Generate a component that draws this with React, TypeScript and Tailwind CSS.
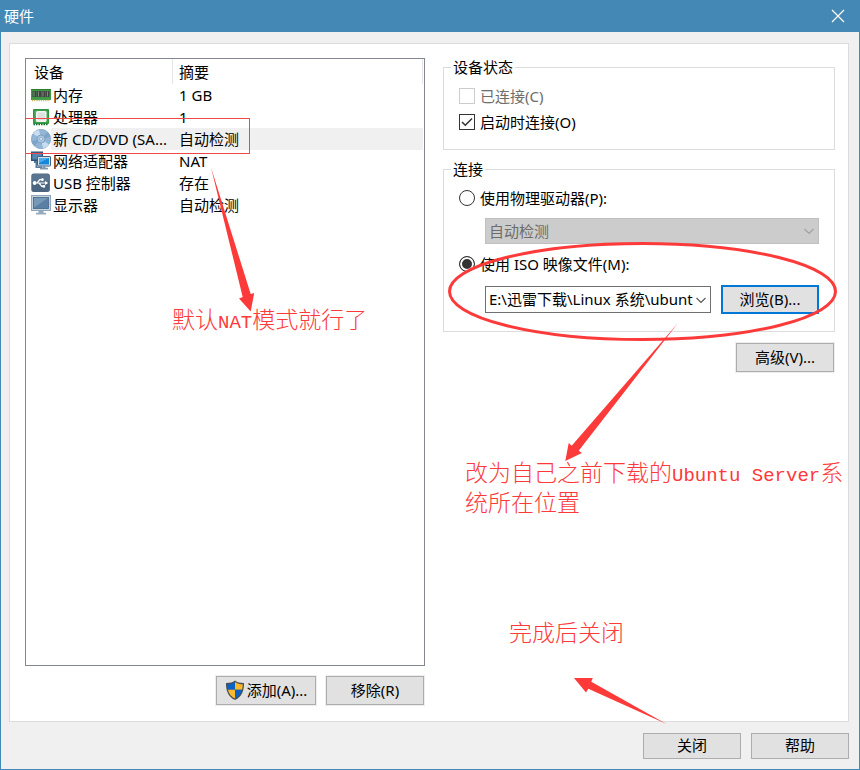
import React, { useState } from 'react';

interface Device {
  name: string;
  summary: string;
  icon: React.ReactNode;
}

const MemoryIcon = () => (
  <svg className="size-5 shrink-0" viewBox="0 0 20 20">
    <rect x="0" y="4" width="20" height="11" fill="#3f9a45" />
    <rect x="0" y="4" width="20" height="1" fill="#2c7d33" />
    <path d="M1.500 6h4v6h-4zM6 6h4v6H6zM10.500 6h4v6h-4zM15 6h3.500v6H15z" fill="#3f423f" />
    <path d="M2.500 6.500h1v5h-1zM7 6.500h1v5H7zM11.500 6.500h1v5h-1zM16 6.500h1v5h-1z" fill="#858a85" />
    <path d="M1 15.500h18" stroke="#c9b45a" strokeWidth="1.600" strokeDasharray="1.200 1" />
  </svg>
);

const CpuIcon = () => (
  <svg className="size-5 shrink-0" viewBox="0 0 20 20">
    <rect x="2" y="2" width="16" height="15" rx="1" fill="#2f9340" />
    <path d="M2.500 17.500h15" stroke="#14692a" strokeWidth="1.400" strokeDasharray="1.500 1" />
    <rect x="3.500" y="3.500" width="13" height="12" fill="#4fb05c" />
    <rect x="5" y="4" width="10.500" height="11" rx="1.500" fill="#f0f1f0" />
    <rect x="6.500" y="5.500" width="7.500" height="7.500" fill="#dfe1df" />
  </svg>
);

const DiscIcon = () => (
  <svg className="size-5 shrink-0" viewBox="0 0 20 20">
    <circle cx="10" cy="10" r="9.700" fill="#94b6d6" stroke="#7295b8" strokeWidth="0.600" />
    <path d="M10 10 2 4.500A9.500 9.500 0 0 1 8 .7zM10 10l8 5.500a9.500 9.500 0 0 1-6 3.800z" fill="#c8ddef" />
    <path d="M10 10 .6 12a9.500 9.500 0 0 0 3 5zM10 10l9.400-2a9.500 9.500 0 0 0-3-5z" fill="#7da5ca" />
    <circle cx="10" cy="10" r="4" fill="#a9c7e2" stroke="#7599bc" strokeWidth="0.800" />
    <circle cx="10" cy="10" r="1.400" fill="#f2f7fb" stroke="#6d90b2" strokeWidth="0.600" />
  </svg>
);

const NetworkIcon = () => (
  <svg className="size-5 shrink-0" viewBox="0 0 20 20">
    <rect x="0.500" y="1" width="11" height="8.500" fill="#3b678f" stroke="#2f5275" />
    <rect x="1.500" y="2" width="9" height="6" fill="#5287b5" />
    <path d="M3 10h3v5.500h5v1.500H4.500v-5H3z" fill="#587a9a" />
    <rect x="6.500" y="5.500" width="13" height="9.500" rx="0.500" fill="#d5e0ea" stroke="#3e6588" />
    <rect x="8" y="7" width="10" height="6.500" fill="#1687d9" />
    <path d="M8 7h10l-10 5z" fill="#50adeb" />
    <path d="M11.500 15h3v1.800h2.500v1.700H9v-1.700h2.500z" fill="#8199af" />
  </svg>
);

const UsbIcon = () => (
  <svg className="size-5 shrink-0" viewBox="0 0 20 20">
    <rect x="0.300" y="0.500" width="18.600" height="18.400" rx="2.500" fill="#4b6581" />
    <rect x="1" y="1" width="17.200" height="8" rx="2" fill="#5b7590" />
    <path
      d="M4 10h11M6 10l2.800-3.300H11M8 10l2.800 3.300H13"
      fill="none"
      stroke="#fff"
      strokeWidth="1.200"
    />
    <circle cx="3.600" cy="10" r="1.900" fill="#fff" />
    <circle cx="11.400" cy="6.700" r="1.400" fill="#fff" />
    <rect x="11.500" y="12" width="2.600" height="2.600" fill="#fff" />
    <path d="M14 8v4l3.200-2z" fill="#fff" />
  </svg>
);

const DisplayIcon = () => (
  <svg className="size-5 shrink-0" viewBox="0 0 20 20">
    <rect x="0.500" y="0.500" width="19" height="15" fill="#c5d3df" stroke="#8fa6bb" />
    <rect x="2.500" y="2.500" width="15" height="11" fill="#5a7fa4" stroke="#456789" strokeWidth="0.800" />
    <path d="M3 3h14L3 12.500z" fill="#7898b7" />
    <path d="M7.500 16h5v1.700H15v1.800H5v-1.800h2.500z" fill="#93a9bd" />
  </svg>
);

const ShieldIcon = () => (
  <svg className="size-5 shrink-0" viewBox="0 0 20 20">
    <path
      d="M10 .4C7.500 2.300 4.400 3 1 2.900.8 10.300 3 16.700 10 19.900 17 16.700 19.200 10.300 19 2.900 15.600 3 12.500 2.300 10 .4z"
      fill="#4b4f55"
    />
    <path d="M10 2C7.700 3.500 5.200 4.300 2.300 4.300c0 2 .1 3.800.6 5.500H10z" fill="#0b62c4" />
    <path d="M10 2c2.300 1.500 4.800 2.300 7.700 2.300 0 2-.1 3.800-.6 5.500H10z" fill="#fdb92c" />
    <path d="M2.900 9.800C3.900 13.800 6.200 16.700 10 18.500V9.800z" fill="#fdb92c" />
    <path d="M17.100 9.800C16.100 13.800 13.800 16.700 10 18.500V9.800z" fill="#0b62c4" />
  </svg>
);

const devices: Device[] = [
  { name: '内存', summary: '1 GB', icon: <MemoryIcon /> },
  { name: '处理器', summary: '1', icon: <CpuIcon /> },
  { name: '新 CD/DVD (SA...', summary: '自动检测', icon: <DiscIcon /> },
  { name: '网络适配器', summary: 'NAT', icon: <NetworkIcon /> },
  { name: 'USB 控制器', summary: '存在', icon: <UsbIcon /> },
  { name: '显示器', summary: '自动检测', icon: <DisplayIcon /> },
];

const Chevron = ({ className }: { className: string }) => (
  <svg
    className={`pointer-events-none absolute top-1/2 right-1 h-3 w-3 -translate-y-1/2 ${className}`}
    viewBox="0 0 12 12"
    fill="none"
    stroke="currentColor"
    strokeWidth="1.100"
  >
    <path d="M1.500 4 6 8.500 10.500 4" />
  </svg>
);

interface DialogButtonProps {
  children: React.ReactNode;
  className?: string;
}

const DialogButton: React.FC<DialogButtonProps> = ({
  children,
  className = 'h-[29px] w-[98px] border border-[#adadad] outline outline-[#ededed]',
}) => (
  <button
    type="button"
    className={`flex shrink-0 items-center justify-center gap-0.5 bg-[#e1e1e1] pb-0.5 whitespace-nowrap ${className}`}
  >
    {children}
  </button>
);

const DeviceList = () => {
  const [selected, setSelected] = useState(2);

  return (
    <div className="flex-1 border border-[#828790] bg-white pr-px">
      <table className="w-full table-fixed border-separate border-spacing-0 text-left">
        <thead>
          <tr className="h-[25px]">
            <th className="w-[147px] border-r border-[#e5e5e5] p-0 pl-2 font-normal">设备</th>
            <th className="border-r border-[#e5e5e5] p-0 pl-1.5 font-normal">摘要</th>
          </tr>
        </thead>
        <tbody>
          {devices.map((device, i) => (
            <tr key={device.name} onClick={() => setSelected(i)}>
              <td className="p-0 pl-[5px]">
                <div className="flex h-[22px] items-center">
                  {device.icon}
                  <span
                    className={`flex-1 pl-0.5 leading-[22px] whitespace-nowrap ${
                      selected === i ? 'bg-[#f0f0f0]' : ''
                    }`}
                  >
                    {device.name}
                  </span>
                </div>
              </td>
              <td className={`p-0 pl-1.5 leading-[22px] ${selected === i ? 'bg-[#f0f0f0]' : ''}`}>
                {device.summary}
              </td>
            </tr>
          ))}
        </tbody>
      </table>
    </div>
  );
};

const StatusGroup = () => (
  <fieldset className="border border-[#dcdcdc] px-[15px] pb-3.5">
    <legend className="-ml-2 px-0.5 leading-[19px]">设备状态</legend>
    <div className="pt-1.5">
      <label className="flex h-[26px] items-center gap-[5px] text-[#6d6d6d]">
        <input type="checkbox" disabled className="size-4 appearance-none border border-[#ccc] bg-white" />
        已连接(C)
      </label>
      <label className="flex h-[26px] items-center gap-[5px]">
        <span className="relative flex">
          <input
            type="checkbox"
            defaultChecked
            className="peer size-4 appearance-none border border-[#333] bg-white"
          />
          <svg
            className="pointer-events-none absolute inset-0 hidden size-4 peer-checked:block"
            viewBox="0 0 16 16"
            fill="none"
            stroke="#333"
            strokeWidth="1.500"
          >
            <path d="M3 8l3.300 3.300L13 4.500" />
          </svg>
        </span>
        启动时连接(O)
      </label>
    </div>
  </fieldset>
);

const radioClass =
  'size-4 appearance-none rounded-full border border-[#333] bg-white checked:bg-[#333] checked:shadow-[inset_0_0_0_2px_#fff]';

const ConnectionGroup = () => (
  <fieldset className="min-w-0 border border-[#dcdcdc] px-[15px] pb-[17px]">
    <legend className="-ml-2 px-0.5 leading-[19px]">连接</legend>
    <div className="pt-1.5">
      <label className="flex h-[26px] items-center gap-[5px]">
        <input type="radio" name="source" className={radioClass} />
        使用物理驱动器(P):
      </label>
      <div className="relative mt-[7px] ml-[26px] text-[#6d6d6d]">
        <select
          disabled
          aria-label="使用物理驱动器"
          className="block h-[26px] w-full appearance-none border border-[#bfbfbf] bg-[#ccc] pr-4 pl-[3px] opacity-100"
        >
          <option>自动检测</option>
        </select>
        <Chevron className="text-[#a0a0a0]" />
      </div>
      <label className="mt-[7px] flex h-[26px] items-center gap-[5px]">
        <input type="radio" name="source" defaultChecked className={radioClass} />
        使用 ISO 映像文件(M):
      </label>
      <div className="mt-2 ml-[26px] flex items-center gap-2.5">
        <div className="relative min-w-0 flex-1">
          <select
            aria-label="使用 ISO 映像文件"
            className="block h-[27px] w-full appearance-none border border-[#707070] bg-white pr-4 pb-0.5 pl-[3px]"
          >
            <option>E:\迅雷下载\Linux 系统\ubunt</option>
          </select>
          <Chevron className="text-[#555]" />
        </div>
        <DialogButton className="h-[29px] w-[98px] border-2 border-[#0078d7]">浏览(B)...</DialogButton>
      </div>
    </div>
  </fieldset>
);

// red notes and arrows drawn over the dialog
const Annotations = () => (
  <div className="pointer-events-none absolute -inset-px font-['Liberation_Mono','Noto_Sans_CJK_SC',monospace] text-[23px] leading-[29px] font-light text-[#fd3a3a]">
    <svg className="absolute top-0 left-0 h-[770px] w-[860px]" viewBox="0 0 860 770" fill="#fd3a3a">
      <rect x="25.500" y="118.500" width="224" height="35" fill="none" stroke="#f04848" />
      <ellipse cx="642.500" cy="291.500" rx="193" ry="48" fill="none" stroke="#fd3a3a" strokeWidth="3" />
      <path d="M211 167.500 250.700 294l3.500-1L250.700 311.500 239 298.500l3.700-1.500z" />
      <path d="M678 323 578.700 450.700l3.200 2.300L565.300 461l3.400-18 3 2.700z" />
      <path d="M666.500 724 591.300 681.700l1.500-3.700H574l12 14.500 2.300-3.700z" />
    </svg>
    <p className="absolute top-[308px] left-[172px] whitespace-nowrap">
      默认<span className="text-[19px]">NAT</span>模式就行了
    </p>
    <p className="absolute top-[461px] left-[465px] whitespace-nowrap">
      改为自己之前下载的<span className="text-[19px]">Ubuntu Server</span>系
      <br />
      统所在位置
    </p>
    <p className="absolute top-[621px] left-[509px] whitespace-nowrap">完成后关闭</p>
  </div>
);

export default function App() {
  return (
    <div className="relative flex min-h-screen flex-col border border-[#4488b5] bg-[#f0f0f0] font-['Noto_Sans','Noto_Sans_CJK_SC',sans-serif] text-[15px] leading-5 text-black">
      <header className="flex h-[31px] items-center justify-between bg-[#4488b5] pr-3.5 pb-px pl-[3px] text-white">
        <h1>硬件</h1>
        <button type="button" aria-label="关闭" className="size-3.5">
          <svg viewBox="0 0 14 14" fill="none" stroke="currentColor" strokeWidth="1.200">
            <path d="M1 1l12 12M13 1 1 13" />
          </svg>
        </button>
      </header>

      <main className="mt-[11px] mr-2.5 ml-2 flex flex-1 gap-[18px] border border-[#dcdcdc] bg-white pt-3.5 pr-[13px] pb-4 pl-[15px]">
        <section className="flex min-w-0 flex-[400] flex-col">
          <DeviceList />
          <div className="mt-2.5 flex justify-end gap-2.5 pr-px">
            <DialogButton className="h-[29px] w-[100px] border border-[#adadad] outline outline-[#ededed]">
              <ShieldIcon />
              添加(A)...
            </DialogButton>
            <DialogButton>移除(R)</DialogButton>
          </div>
        </section>

        <section className="flex min-w-0 flex-[392] flex-col">
          <StatusGroup />
          <div className="mt-2.5">
            <ConnectionGroup />
          </div>
          <div className="mt-[11px] flex justify-end pr-px">
            <DialogButton>高级(V)...</DialogButton>
          </div>
        </section>
      </main>

      <footer className="flex justify-end gap-2.5 pt-[11px] pr-2.5 pb-2.5">
        <DialogButton className="h-[26px] w-[98px] border border-[#adadad]">关闭</DialogButton>
        <DialogButton className="h-[26px] w-[98px] border border-[#adadad]">帮助</DialogButton>
      </footer>

      <Annotations />
    </div>
  );
}
